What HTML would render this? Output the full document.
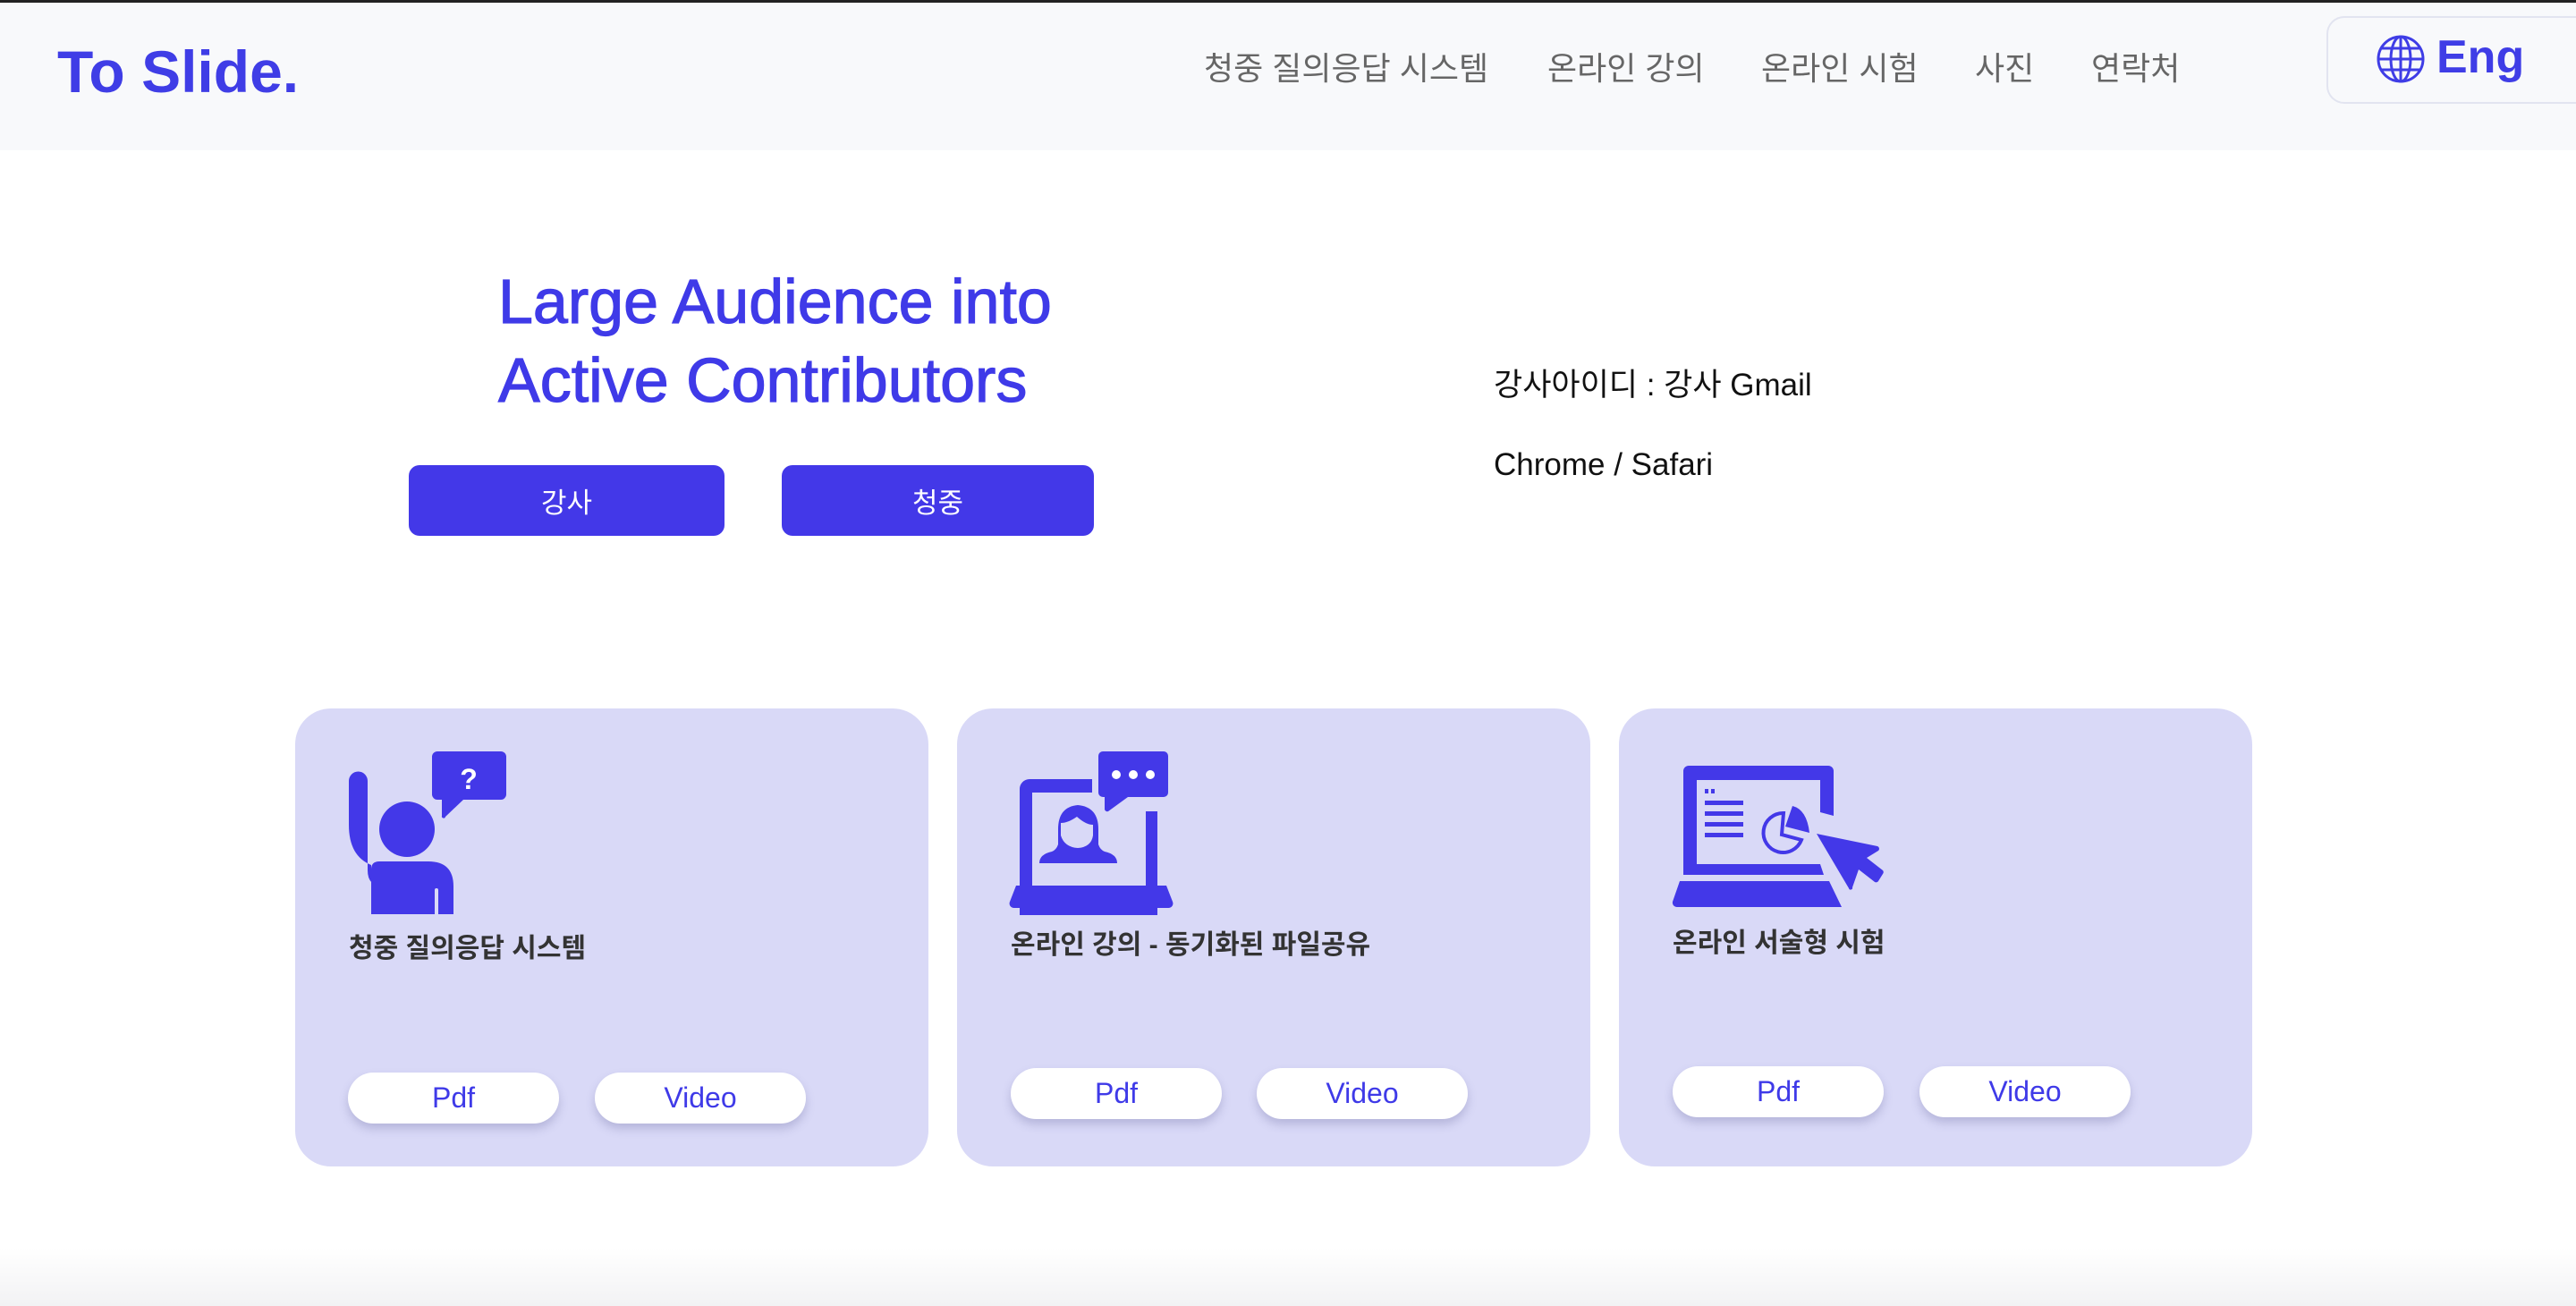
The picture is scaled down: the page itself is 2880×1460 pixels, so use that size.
<!DOCTYPE html>
<html><head><meta charset="utf-8"><style>
*{margin:0;padding:0;box-sizing:border-box}
body{width:2880px;height:1460px;background:#fff;position:relative;overflow:hidden;font-family:"Liberation Sans","Noto Sans CJK KR",sans-serif}
.hdr{position:absolute;left:0;top:0;width:2880px;height:168px;background:#f8f9fb;border-top:3px solid #222}
.abs{position:absolute;white-space:nowrap}
.logo{left:64px;top:42px;font-size:66px;font-weight:bold;color:#3f3de6;letter-spacing:0px}
.nav{top:48px;font-size:36px;color:#666}
.eng{left:2601px;top:18px;width:300px;height:98px;border:2px solid #e2e4f0;border-radius:20px;background:#f8f9fb}
.h1{left:557px;font-size:70px;color:#3f3ae8;font-weight:normal;-webkit-text-stroke:1.2px #3f3ae8}
.btn{height:79px;background:#4338e8;border-radius:12px;color:#fff;font-size:31px;display:flex;align-items:center;justify-content:center}
.rt{left:1670px;font-size:35px;color:#111}
.card{top:792px;height:512px;width:708px;background:#d9d9f7;border-radius:40px}
.ct{font-size:30px;font-weight:bold;color:#333}
.pill{height:57px;width:236px;background:#fff;border-radius:29px;box-shadow:0 6px 10px rgba(80,80,140,.25);color:#3f3ae8;font-size:32px;display:flex;align-items:center;justify-content:center}
.foot{position:absolute;left:0;top:1395px;width:2880px;height:65px;background:linear-gradient(#fff,#f2f2f4)}
</style></head><body>
<div class="hdr"></div>
<div class="abs logo">To Slide.</div>
<div class="abs nav" style="left:1346px">청중 질의응답 시스템</div>
<div class="abs nav" style="left:1730px">온라인 강의</div>
<div class="abs nav" style="left:1969px">온라인 시험</div>
<div class="abs nav" style="left:2208px">사진</div>
<div class="abs nav" style="left:2338px">연락처</div>
<div class="abs eng"></div>
<svg class="abs" style="left:2656px;top:38px" width="56" height="56" viewBox="0 0 56 56" fill="none" stroke="#3f3de6" stroke-width="3"><circle cx="28" cy="28" r="25"/><ellipse cx="28" cy="28" rx="11" ry="25"/><line x1="28" y1="3" x2="28" y2="53"/><line x1="3" y1="28" x2="53" y2="28"/><line x1="7" y1="16" x2="49" y2="16"/><line x1="7" y1="40" x2="49" y2="40"/></svg>
<div class="abs" style="left:2724px;top:34px;font-size:52px;font-weight:bold;color:#3f3de6">Eng</div>

<div class="abs h1" style="top:297px">Large Audience into</div>
<div class="abs h1" style="top:385px">Active Contributors</div>
<div class="abs btn" style="left:457px;top:520px;width:353px">강사</div>
<div class="abs btn" style="left:874px;top:520px;width:349px">청중</div>
<div class="abs rt" style="top:402px">강사아이디 : 강사 Gmail</div>
<div class="abs rt" style="top:500px">Chrome / Safari</div>

<div class="abs card" style="left:330px"></div>
<div class="abs card" style="left:1070px"></div>
<div class="abs card" style="left:1810px"></div>

<svg class="abs" style="left:0;top:0" width="2880" height="1460" viewBox="0 0 2880 1460">
<g fill="#4338e8">
<path d="M390 873a10.5 10.5 0 0 1 21 0v100q0 18 18 18h0v31h-14v-55q-25-10-25-45z"/>
<path d="M415 1022v-50q0-9 9-9h55q28 0 28 28v31h-17v-27a2 2 0 0 0-4 0v27z"/>
<circle cx="455" cy="927" r="31"/>
<path d="M489 840h71a6 6 0 0 1 6 6v42a6 6 0 0 1-6 6h-42l-20 19a2 2 0 0 1-4-1v-18h-5a6 6 0 0 1-6-6v-42a6 6 0 0 1 6-6z"/>
<path d="M1151 871h70v15h-67v122h127v-101h13v116h-154v-141a11 11 0 0 1 11-11z"/>
<path d="M1136 990h168l7 18a5 5 0 0 1-5 7h-172a5 5 0 0 1-5-7z"/>
<path d="M1233 840h68a5 5 0 0 1 5 5v41a5 5 0 0 1-5 5h-40l-22 16a3 3 0 0 1-4-2v-14h-2a5 5 0 0 1-5-5v-41a5 5 0 0 1 5-5z"/>
<path d="M1162 965q0-10 14-13q5-2 7-8v-17q0-25 22-27q23 2 23 27v17q2 6 7 8q14 3 14 13z"/>
<path d="M1888 856h156a6 6 0 0 1 6 6v50l-15-4v-36h-138v94h138l4 12h-157v-116a6 6 0 0 1 6-6z"/>
<path d="M1878 985h167l14 29h-184a5 5 0 0 1-5-6z"/>
<rect x="1906" y="882" width="4" height="5"/><rect x="1913" y="882" width="4" height="5"/>
<rect x="1906" y="895" width="43" height="5"/><rect x="1906" y="907" width="43" height="5"/><rect x="1906" y="919" width="43" height="5"/><rect x="1906" y="931" width="43" height="5"/>
<path d="M2031 932l68 14a3 3 0 0 1 1 5l-13 8l18 14a3 3 0 0 1 0 4l-5 8a3 3 0 0 1-4 1l-18-14l-7 20a2 2 0 0 1-4 1z"/>
<path d="M2004 901q16 4 19 30l-27-7z"/>
</g>
<g fill="#fff"><circle cx="1248" cy="866" r="5"/><circle cx="1267" cy="866" r="5"/><circle cx="1286" cy="866" r="5"/>
<path d="M1186 920q8 0 18-7q10 9 18 9v12q-2 13-17 14q-15-1-19-14z" fill="#d9d9f7"/>
<text x="524" y="882" font-family="Liberation Sans" font-weight="bold" font-size="32" text-anchor="middle">?</text></g>
<g fill="none" stroke="#4338e8" stroke-width="4"><path d="M1994 909a22 22 0 1 0 20 30l-22-6z"/></g>
</svg>

<div class="abs ct" style="left:390px;top:1035px">청중 질의응답 시스템</div>
<div class="abs ct" style="left:1130px;top:1031px">온라인 강의 - 동기화된 파일공유</div>
<div class="abs ct" style="left:1870px;top:1029px">온라인 서술형 시험</div>

<div class="abs pill" style="left:389px;top:1199px">Pdf</div>
<div class="abs pill" style="left:665px;top:1199px">Video</div>
<div class="abs pill" style="left:1130px;top:1194px">Pdf</div>
<div class="abs pill" style="left:1405px;top:1194px">Video</div>
<div class="abs pill" style="left:1870px;top:1192px">Pdf</div>
<div class="abs pill" style="left:2146px;top:1192px">Video</div>
<div class="foot"></div>
</body></html>
